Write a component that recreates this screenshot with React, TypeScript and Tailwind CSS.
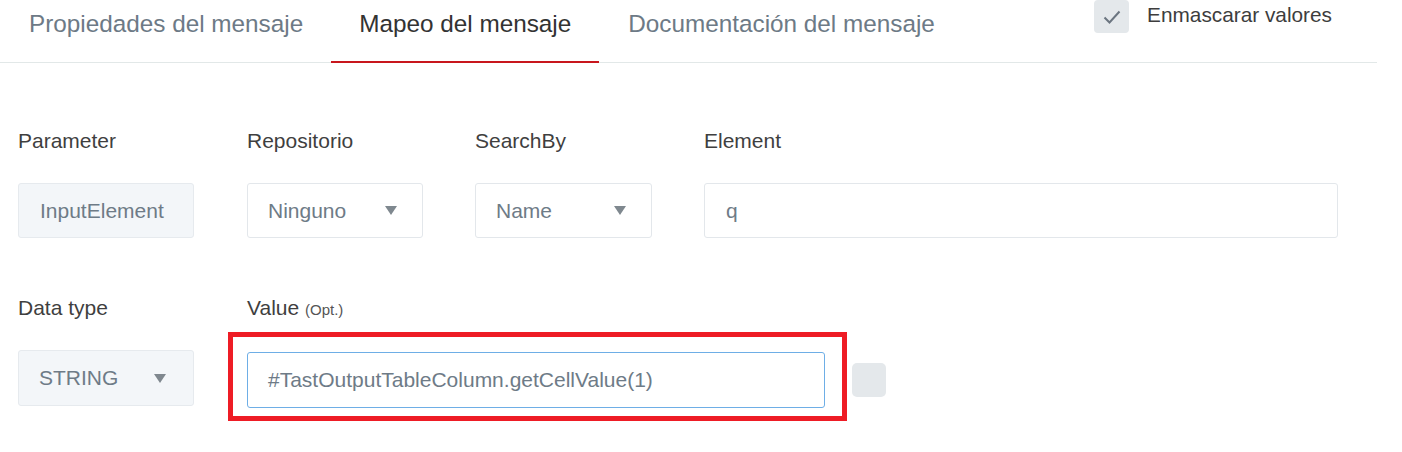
import React from "react";

const Arrow = () => (
  <svg width="12" height="9" viewBox="0 0 12 9" className="shrink-0">
    <path d="M0 0 H12 L6 9 Z" fill="#7f888f" />
  </svg>
);

function Select({ value, w }: { value: string; w: string }) {
  return (
    <div
      className={`${w} h-[55px] flex items-center justify-between pl-[20px] pr-[25px] border border-[#e3e7eb] rounded-[3px] bg-white text-[21px] text-[#6e7b87]`}
    >
      <span>{value}</span>
      <Arrow />
    </div>
  );
}

export default function App() {
  return (
    <div className="w-[1402px] h-[452px] bg-white overflow-hidden relative font-['Liberation_Sans',Arial,sans-serif]">
      <div className="w-[1377px] flex justify-between items-start border-b border-[#e2e8e8]">
        <div className="flex h-[62px] text-[24.3px]">
          <div className="pl-[29px] pr-[28px] flex items-center pb-[13px] text-[#6d7a86]">
            Propiedades del mensaje
          </div>
          <div className="px-[28px] flex items-center pb-[13px] text-[#333] border-b-2 border-[#c8161d] -mb-px">
            Mapeo del mensaje
          </div>
          <div className="px-[29px] flex items-center pb-[13px] text-[#6d7a86]">
            Documentación del mensaje
          </div>
        </div>
        <div className="flex items-start pr-[45px]">
          <div className="w-[35px] h-[33px] rounded-[4px] bg-[#e4e8eb] flex items-center justify-center">
            <svg width="20" height="16" viewBox="0 0 20 16">
              <path d="M2.5 8.5 L7.5 13.5 L17.5 2.5" fill="none" stroke="#6b7580" strokeWidth="2" />
            </svg>
          </div>
          <span className="ml-[18px] text-[20.8px] leading-[30px] text-[#3d3d3d]">
            Enmascarar valores
          </span>
        </div>
      </div>

      <div className="pl-[18px] pt-[66px]">
        <div className="flex gap-[53px] text-[21px] leading-[24px] text-[#3f3f3f]">
          <div className="w-[176px] flex flex-col gap-[30px]">
            <span>Parameter</span>
            <div className="h-[55px] flex items-center pl-[21px] bg-[#f3f6f9] border border-[#e6eaee] rounded-[3px] text-[#6e7b87]">
              InputElement
            </div>
          </div>
          <div className="w-[176px] flex flex-col gap-[30px]">
            <span>Repositorio</span>
            <Select value="Ninguno" w="w-[176px]" />
          </div>
          <div className="w-[177px] flex flex-col gap-[30px] -ml-[1px]">
            <span>SearchBy</span>
            <Select value="Name" w="w-[177px]" />
          </div>
          <div className="w-[634px] flex flex-col gap-[30px] -ml-[1px]">
            <span>Element</span>
            <div className="h-[55px] flex items-center pl-[21px] bg-white border border-[#e3e7eb] rounded-[3px] text-[#6e7b87]">
              q
            </div>
          </div>
        </div>

        <div className="flex gap-[53px] mt-[58px] text-[21px] leading-[24px] text-[#3f3f3f]">
          <div className="w-[176px] flex flex-col gap-[30px]">
            <span>Data type</span>
            <div className="h-[56px] flex items-center justify-between pl-[20px] pr-[27px] bg-[#f3f6f9] border border-[#e6eaee] rounded-[3px] text-[#6e7b87]">
              <span>STRING</span>
              <Arrow />
            </div>
          </div>
          <div className="flex flex-col gap-[30px]">
            <span>
              Value <span className="text-[15px] text-[#555]">(Opt.)</span>
            </span>
            <div className="flex items-center">
              <div className="w-[578px] h-[56px] flex items-center pl-[20px] bg-white border border-[#6eaee6] rounded-[3px] text-[#6e7b87]">
                #TastOutputTableColumn.getCellValue(1)
              </div>
              <div className="ml-[27px] w-[34px] h-[34px] rounded-[5px] bg-[#e4e8eb]" />
            </div>
          </div>
        </div>
      </div>

      <div className="absolute left-[228px] top-[332px] w-[619px] h-[89px] border-[5px] border-[#ee1c25]" />
    </div>
  );
}
